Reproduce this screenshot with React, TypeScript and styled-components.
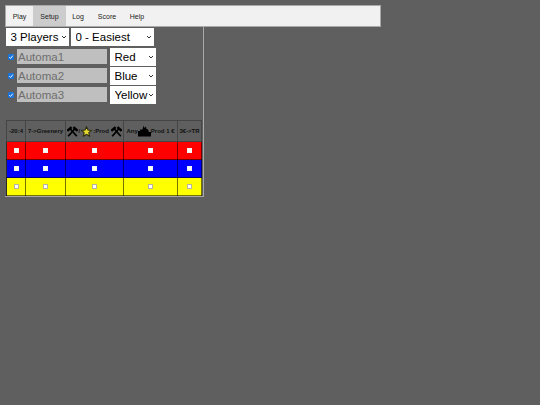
import React from "react";
import styled, { createGlobalStyle } from "styled-components";

const chevron =
  "url(\"data:image/svg+xml,%3Csvg xmlns='http://www.w3.org/2000/svg' width='6' height='4' viewBox='0 0 6 4'%3E%3Cpath d='M1 1 L3 3 L5 1' fill='none' stroke='%23333' stroke-width='1'/%3E%3C/svg%3E\")";
const tick =
  "url(\"data:image/svg+xml,%3Csvg xmlns='http://www.w3.org/2000/svg' width='7' height='7' viewBox='0 0 7 7'%3E%3Cpath d='M1.5 3.7 L3 5.2 L5.6 1.9' fill='none' stroke='%23fff' stroke-width='1.1'/%3E%3C/svg%3E\")";

const Global = createGlobalStyle`
  html, body { margin: 0; padding: 0; background: #5f5f5f; }
  body { font-family: "Liberation Sans", Arial, sans-serif; width: 540px; height: 405px; overflow: hidden; }
`;
const Page = styled.div`
  padding: 5px 0 0 5px;
  width: 376px;
`;
const TabBar = styled.nav`
  display: flex;
  height: 22px;
  box-sizing: border-box;
  background: #f1f1f1;
  border: 1px solid #a9a9a9;
  width: 376px;
`;
const Tab = styled.button<{ $active?: boolean; $w: number }>`
  width: ${(p) => p.$w}px;
  border: 0;
  padding: 0;
  margin: 0;
  background: ${(p) => (p.$active ? "#cccccc" : "transparent")};
  color: #222;
  font: 7px "Liberation Sans", Arial, sans-serif;
`;
const Panel = styled.section`
  width: 199px;
  box-sizing: border-box;
  border-right: 1px solid #a9a9a9;
  border-bottom: 1px solid #a9a9a9;
  padding: 0 0 0 1px;
  height: 170px;
`;
const TopRow = styled.div`
  display: flex;
  gap: 2px;
  height: 20px;
  align-items: flex-start;
  padding-top: 1px;
  box-sizing: border-box;
`;
const Select = styled.select<{ $w: number }>`
  appearance: none;
  width: ${(p) => p.$w}px;
  height: 18px;
  box-sizing: border-box;
  border: 0;
  border-radius: 0;
  background: #fff ${chevron} no-repeat right 2px center;
  color: #000;
  font: 11.5px "Liberation Sans", Arial, sans-serif;
  padding: 0 0 0 4.5px;
  margin: 0;
`;
const PlayerRow = styled.div`
  display: flex;
  align-items: center;
  height: 19px;
`;
const Check = styled.input.attrs({ type: "checkbox" })`
  appearance: none;
  width: 6px;
  height: 6px;
  margin: 1px 3px 0 2px;
  border-radius: 1px;
  background: #1a73d8 ${tick} center / 6px 6px no-repeat;
`;
const NameInput = styled.input`
  width: 90px;
  height: 15px;
  box-sizing: border-box;
  border: 0;
  margin: 0 3px 0 0;
  padding: 0 1px;
  background: #bfbfbf;
  color: #6e6e6e;
  font: 11.5px "Liberation Sans", Arial, sans-serif;
  &::placeholder { color: #6e6e6e; opacity: 1; }
`;
const Scores = styled.table`
  margin-top: 16px;
  border-collapse: collapse;
  width: 195px;
  table-layout: fixed;
  border: 1px solid #4a4a4a;
`;
const Head = styled.th`
  height: 20px;
  padding: 0;
  border: 1px solid #454545;
  background: #5f5f5f;
  color: #111;
  font: bold 6px "Liberation Sans", Arial, sans-serif;
  white-space: nowrap;
  overflow: hidden;
  vertical-align: middle;
`;
const Cell = styled.td<{ $bg: string }>`
  height: 17px;
  padding: 0;
  border: 1px solid rgba(0, 0, 0, 0.55);
  background: ${(p) => p.$bg};
  background-clip: padding-box;
  text-align: center;
`;
const CellCheck = styled.input.attrs({ type: "checkbox" })<{ $faded?: boolean }>`
  appearance: none;
  display: block;
  width: 5px;
  height: 5px;
  margin: auto;
  box-sizing: border-box;
  background: #fff;
  border: 1px solid ${(p) => (p.$faded ? "#b5b5a0" : "#f4f4f4")};
`;
const Glyph = styled.svg`
  vertical-align: middle;
`;
const StarGlyph = styled(Glyph)`
  margin: 0 1px 0 1px;
`;

const HammerShape = () => (
  <>
    <path d="M1.3 11.2 L8.6 3" fill="none" stroke="#000" strokeWidth="1.9" />
    <path d="M7 1.2 L11.6 5.2" fill="none" stroke="#000" strokeWidth="2.6" />
  </>
);
const Hammers = () => (
  <Glyph width="11" height="11" viewBox="0 0 12 12">
    <HammerShape />
    <g transform="translate(12 0) scale(-1 1)"><HammerShape /></g>
  </Glyph>
);
const Star = () => (
  <StarGlyph width="11" height="11" viewBox="0 0 12 12">
    <path d="M6 .8 L7.6 4.4 L11.4 4.8 L8.5 7.3 L9.4 11.2 L6 9.1 L2.6 11.2 L3.5 7.3 L.6 4.8 L4.4 4.4 Z" fill="#e8dc30" stroke="#2a2a10" strokeWidth="1.1" />
  </StarGlyph>
);
const City = () => (
  <Glyph width="13" height="12" viewBox="0 0 13 12">
    <path d="M0 11.5 L0 6 L2 6 L2.5 4 L4 5 L5 3 L5.5 .5 L6.5 3 L8 1.5 L8.5 4 L10 4.5 L11 7 L13 7 L13 11.5 Z" fill="#000" />
  </Glyph>
);

const rows = ["#ff0000", "#0000ff", "#ffff00"];
const widths = [19, 40, 58, 54, 24];

export default function App() {
  return (
    <Page>
      <Global />
      <TabBar>
        <Tab $w={27}>Play</Tab>
        <Tab $w={33} $active>Setup</Tab>
        <Tab $w={24}>Log</Tab>
        <Tab $w={34}>Score</Tab>
        <Tab $w={26}>Help</Tab>
      </TabBar>
      <Panel>
        <TopRow>
          <Select $w={63} defaultValue="3"><option value="3">3 Players</option></Select>
          <Select $w={83} defaultValue="0"><option value="0">0 - Easiest</option></Select>
        </TopRow>
        {[["Automa1", "Red"], ["Automa2", "Blue"], ["Automa3", "Yellow"]].map(([n, c]) => (
          <PlayerRow key={n}>
            <Check defaultChecked />
            <NameInput placeholder={n} />
            <Select $w={46} defaultValue={c}><option>{c}</option></Select>
          </PlayerRow>
        ))}
        <Scores>
          <colgroup>{widths.map((w, i) => <col key={i} style={{ width: w }} />)}</colgroup>
          <thead>
            <tr>
              <Head>-20:4</Head>
              <Head>7-&gt;Greenery</Head>
              <Head><Hammers />/<Star />:Prod <Hammers /></Head>
              <Head>Any<City />Prod 1 €</Head>
              <Head>3€-&gt;TR</Head>
            </tr>
          </thead>
          <tbody>
            {rows.map((bg, r) => (
              <tr key={bg}>
                {widths.map((_, i) => <Cell key={i} $bg={bg}><CellCheck $faded={r === 2} /></Cell>)}
              </tr>
            ))}
          </tbody>
        </Scores>
      </Panel>
    </Page>
  );
}
